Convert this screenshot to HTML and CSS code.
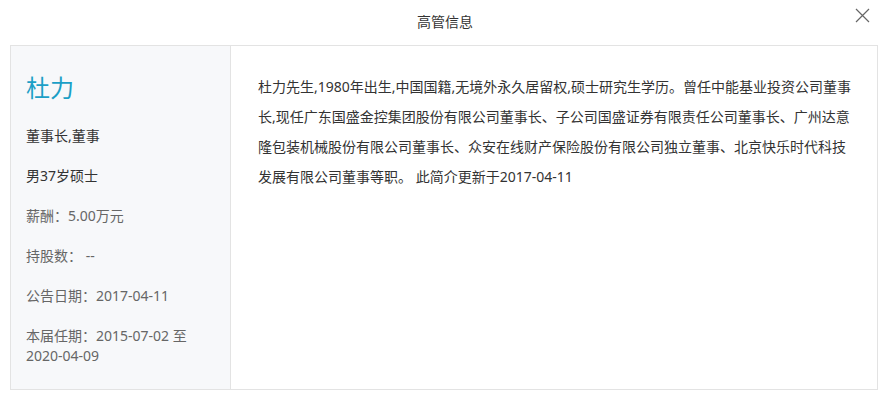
FILE: index.html
```html
<!DOCTYPE html>
<html lang="zh-CN">
<head>
  <meta charset="UTF-8">
  <title>高管信息</title>
  <link rel="stylesheet" href="styles.css">
</head>
<body>
  <div class="dialog">
    <div class="dialog-header">
      <span class="dialog-title">高管信息</span>
      <span class="close-btn">
        <svg width="15" height="15" viewBox="0 0 15 15"><path d="M1 1L14 14M14 1L1 14" stroke="#666" stroke-width="1.2" fill="none"/></svg>
      </span>
    </div>
    <div class="profile">
      <div class="profile-side">
        <div class="name">杜力</div>
        <div class="item dark">董事长,董事</div>
        <div class="item dark">男37岁硕士</div>
        <div class="item">薪酬：5.00万元</div>
        <div class="item">持股数： --</div>
        <div class="item">公告日期：2017-04-11</div>
        <div class="item">本届任期：2015-07-02 至 2020-04-09</div>
      </div>
      <div class="profile-bio">
        杜力先生,1980年出生,中国国籍,无境外永久居留权,硕士研究生学历。曾任中能基业投资公司董事长,现任广东国盛金控集团股份有限公司董事长、子公司国盛证券有限责任公司董事长、广州达意隆包装机械股份有限公司董事长、众安在线财产保险股份有限公司独立董事、北京快乐时代科技发展有限公司董事等职。 此简介更新于2017-04-11
      </div>
    </div>
  </div>
</body>
</html>
```

FILE: styles.css
```css
body {
  margin: 0;
  background-color: #fff;
  font-family: "Noto Sans", "Noto Sans CJK SC", sans-serif;
  font-size: 14px;
  color: #333;
}
.dialog {
  width: 890px;
}
.dialog-header {
  position: relative;
  height: 45px;
  display: flex;
  justify-content: center;
  align-items: center;
  padding-bottom: 4px;
  box-sizing: border-box;
}
.dialog-title {
  font-size: 14px;
  color: #333;
}
.close-btn {
  position: absolute;
  top: 8px;
  right: 20px;
  width: 15px;
  height: 15px;
  cursor: pointer;
}
.close-btn svg {
  display: block;
}
.profile {
  display: flex;
  margin: 0 12px 0 10px;
  border: 1px solid #e3e3e3;
}
.profile-side {
  width: 220px;
  flex-shrink: 0;
  box-sizing: border-box;
  padding: 27px 20px 23px 15px;
  background-color: #f7f8fa;
  border-right: 1px solid #e3e3e3;
}
.name {
  font-size: 24px;
  line-height: 30px;
  color: #1b9fc6;
  margin-bottom: 23px;
}
.item {
  line-height: 20px;
  margin-top: 20px;
  color: #666;
}
.item.dark {
  color: #333;
}
.profile-bio {
  flex: 1;
  padding: 26px 22px 0 27px;
  line-height: 30px;
  color: #333;
}
```
